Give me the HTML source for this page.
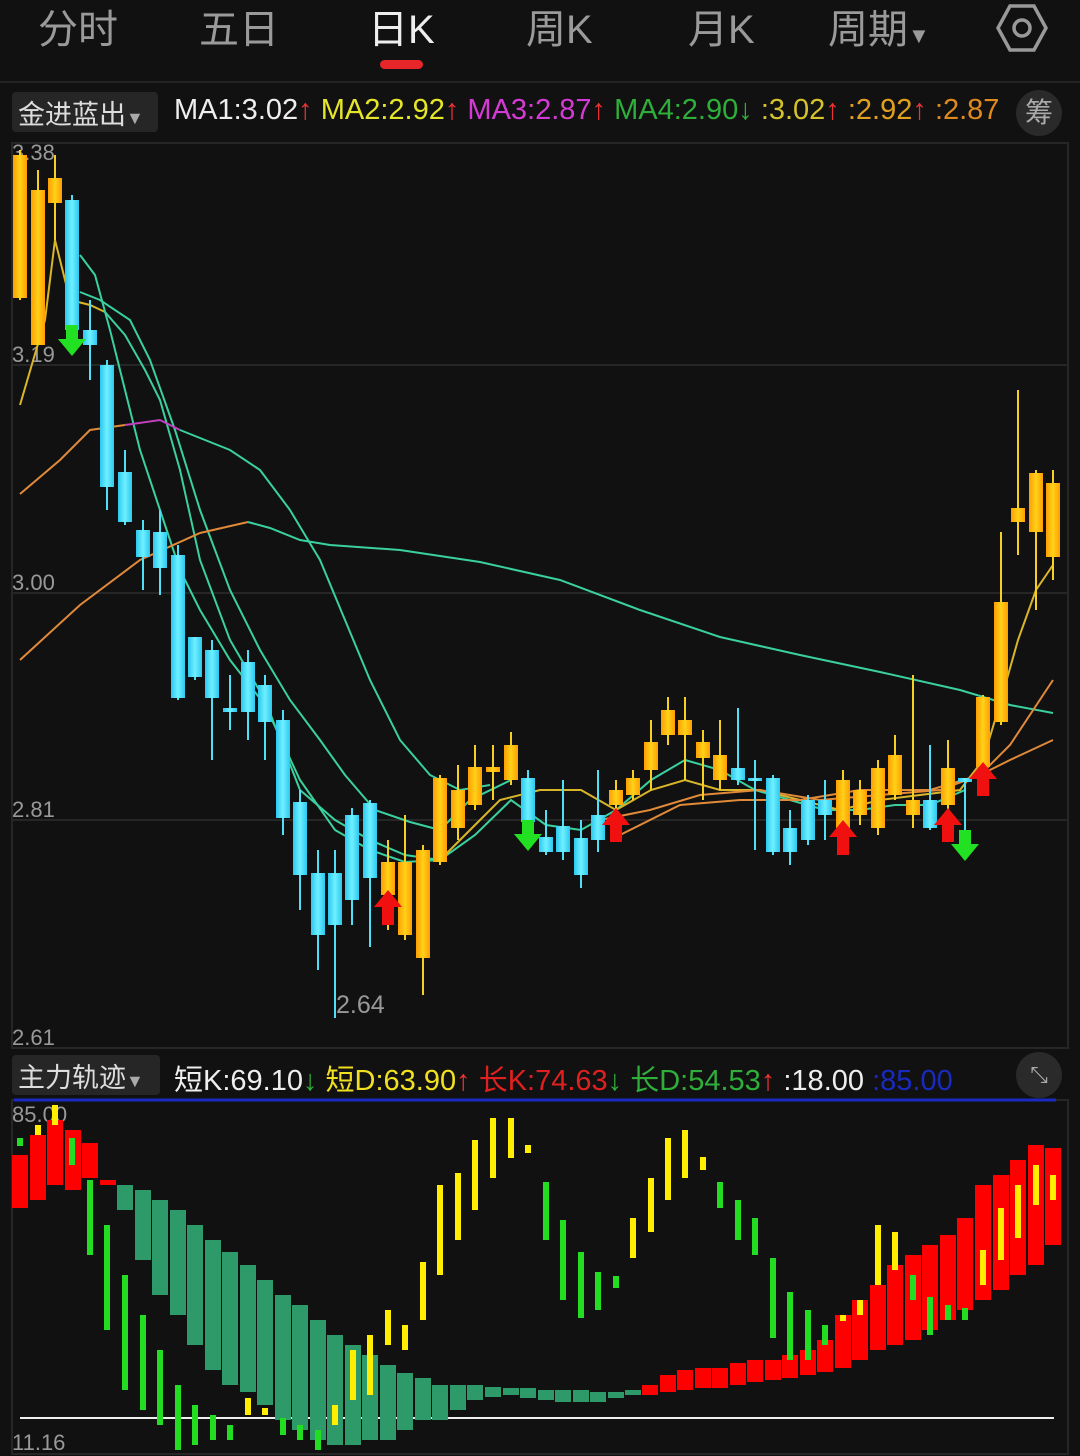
<!DOCTYPE html>
<html><head><meta charset="utf-8"><style>
body{margin:0;background:#111;width:1080px;height:1456px;overflow:hidden;font-family:"Liberation Sans","Noto Sans CJK SC",sans-serif}
.tab{position:absolute;top:-3px;font-size:40px;color:#9a9a9a}
.leg{position:absolute;font-size:29px;white-space:nowrap}
</style></head><body>
<div style="position:absolute;left:0;top:0;width:1080px;height:82px;background:#111"></div>
<div class="tab" style="left:38px">分时</div>
<div class="tab" style="left:199px">五日</div>
<div class="tab" style="left:368px;color:#eee">日K</div>
<div class="tab" style="left:526px">周K</div>
<div class="tab" style="left:688px">月K</div>
<div class="tab" style="left:828px">周期<span style="font-size:22px">▼</span></div>
<svg style="position:absolute;left:996px;top:2px" width="52" height="52" viewBox="0 0 52 52"><polygon points="14,4 38,4 50,26 38,48 14,48 2,26" fill="none" stroke="#999" stroke-width="3.5"/><circle cx="26" cy="26" r="8" fill="none" stroke="#999" stroke-width="3.5"/></svg>
<div style="position:absolute;left:380px;top:60px;width:43px;height:9px;border-radius:5px;background:#e8262a"></div>
<div style="position:absolute;left:0;top:81px;width:1080px;height:2px;background:#222"></div>
<div style="position:absolute;left:12px;top:92px;width:146px;height:40px;background:#262626;border-radius:4px"></div>
<div class="leg" style="left:18px;top:93px;color:#ddd;font-size:27px">金进蓝出<span style="font-size:18px;color:#aaa">▼</span></div>
<div class="leg" style="left:174px;top:94px"><span style="color:#eee">MA1:3.02</span><span style="color:#e33">↑</span> <span style="color:#e5e52a">MA2:2.92</span><span style="color:#e33">↑</span> <span style="color:#d63ad6">MA3:2.87</span><span style="color:#e33">↑</span> <span style="color:#2fae3a">MA4:2.90</span><span style="color:#2fae3a">↓</span> <span style="color:#d6c22a">:3.02</span><span style="color:#e33">↑</span> <span style="color:#e0a020">:2.92</span><span style="color:#e33">↑</span> <span style="color:#e0891e">:2.87</span></div>
<div style="position:absolute;left:1016px;top:90px;width:46px;height:46px;border-radius:23px;background:#2a2a2a;color:#aaa;font-size:28px;text-align:center;line-height:46px">筹</div>

<svg style="position:absolute;left:0;top:0" width="1080" height="1456">
<rect x="12" y="143" width="1056" height="905" fill="none" stroke="#262626" stroke-width="2"/>
<g stroke="#262626" stroke-width="2"><line x1="12" y1="365" x2="1068" y2="365"/><line x1="12" y1="593" x2="1068" y2="593"/><line x1="12" y1="820" x2="1068" y2="820"/></g>
<g fill="#999" font-size="22" font-family="Liberation Sans"><text x="12" y="160">3.38</text><text x="12" y="362">3.19</text><text x="12" y="590">3.00</text><text x="12" y="817">2.81</text><text x="12" y="1045">2.61</text><text x="336" y="1013" font-size="25">2.64</text></g>
<g fill="none" stroke-width="2">
<polyline stroke="#d9b52a" points="20,405 45,320 55,240 70,300 90,305 105,312"/>
<polyline stroke="#3ad0a0" points="105,312 125,335 145,370 160,400 180,470 200,560 230,640 265,700 300,790 335,820 370,840 405,855 440,860 475,835 511,800 546,825 581,830 616,810 651,780 685,760 720,770 755,790 790,800 825,810 860,810 895,805 930,805 965,790"/>
<polyline stroke="#3ad0a0" points="80,255 95,275 110,330 125,390 140,450 160,510 180,570 200,610 230,660 265,705 300,780 335,830 370,850 405,862 440,860"/>
<polyline stroke="#3ad0a0" points="80,292 100,300 130,320 150,360 175,430 200,510 230,590 260,650 290,700 320,740 345,775 375,810 410,822 440,830 470,800 511,780"/>
<polyline stroke="#e08a3a" points="20,494 60,460 90,430 125,425"/>
<polyline stroke="#c040c0" points="125,425 160,420 180,430"/>
<polyline stroke="#3ad0a0" points="180,430 230,450 260,470 290,510 320,560 345,620 370,680 400,740 430,775 460,790 490,785"/>
<polyline stroke="#e08a3a" points="20,660 80,605 140,560 200,533 248,522"/>
<polyline stroke="#3ad0a0" points="248,522 270,528 300,540 330,545 400,550 480,562 560,580 640,610 720,637 800,655 880,672 960,690 1010,705 1053,713"/>
<polyline stroke="#d9b52a" points="440,860 470,830 500,800 540,790 581,790 616,810 651,790 685,780 720,790 760,790 800,800 840,810 880,800 920,795 960,790 983,760 1001,700 1018,640 1036,590 1053,565"/>
<polyline stroke="#e08a3a" points="600,820 650,810 700,795 760,790 820,800 880,795 940,790 980,775 1010,745 1053,680"/>
<polyline stroke="#e08a3a" points="620,835 680,805 740,800 800,800 860,790 930,790 980,775 1010,760 1053,740"/>
</g>
<defs><linearGradient id="g" x1="0" x2="1"><stop offset="0" stop-color="#ff9d00"/><stop offset=".5" stop-color="#ffd21a"/><stop offset="1" stop-color="#ff9d00"/></linearGradient><linearGradient id="c" x1="0" x2="1"><stop offset="0" stop-color="#2cc8f0"/><stop offset=".5" stop-color="#6ff0ff"/><stop offset="1" stop-color="#2cc8f0"/></linearGradient></defs>
<g stroke-width="2">
<g stroke="#f5d020">
<line x1="20" y1="150" x2="20" y2="300"/><line x1="38" y1="170" x2="38" y2="345"/><line x1="55" y1="155" x2="55" y2="240"/>
<line x1="388" y1="840" x2="388" y2="930"/><line x1="405" y1="815" x2="405" y2="940"/><line x1="423" y1="845" x2="423" y2="995"/><line x1="440" y1="775" x2="440" y2="865"/><line x1="458" y1="765" x2="458" y2="840"/><line x1="475" y1="745" x2="475" y2="810"/><line x1="493" y1="745" x2="493" y2="800"/><line x1="511" y1="732" x2="511" y2="785"/>
<line x1="616" y1="780" x2="616" y2="815"/><line x1="633" y1="770" x2="633" y2="800"/><line x1="651" y1="720" x2="651" y2="790"/><line x1="668" y1="697" x2="668" y2="745"/><line x1="685" y1="697" x2="685" y2="780"/><line x1="703" y1="730" x2="703" y2="800"/><line x1="720" y1="720" x2="720" y2="790"/>
<line x1="843" y1="770" x2="843" y2="835"/><line x1="860" y1="780" x2="860" y2="825"/><line x1="878" y1="760" x2="878" y2="835"/><line x1="895" y1="735" x2="895" y2="800"/><line x1="913" y1="675" x2="913" y2="828"/><line x1="948" y1="740" x2="948" y2="810"/><line x1="983" y1="695" x2="983" y2="790"/><line x1="1001" y1="532" x2="1001" y2="725"/><line x1="1018" y1="390" x2="1018" y2="555"/><line x1="1036" y1="470" x2="1036" y2="610"/><line x1="1053" y1="470" x2="1053" y2="580"/>
</g>
<g stroke="#4fe0f5">
<line x1="72" y1="195" x2="72" y2="340"/><line x1="90" y1="300" x2="90" y2="380"/><line x1="107" y1="360" x2="107" y2="510"/><line x1="125" y1="450" x2="125" y2="525"/><line x1="143" y1="520" x2="143" y2="590"/><line x1="160" y1="510" x2="160" y2="595"/><line x1="178" y1="545" x2="178" y2="700"/><line x1="195" y1="637" x2="195" y2="680"/><line x1="212" y1="640" x2="212" y2="760"/><line x1="230" y1="675" x2="230" y2="730"/><line x1="248" y1="650" x2="248" y2="740"/><line x1="265" y1="675" x2="265" y2="760"/><line x1="283" y1="710" x2="283" y2="835"/><line x1="300" y1="790" x2="300" y2="910"/><line x1="318" y1="850" x2="318" y2="970"/><line x1="335" y1="850" x2="335" y2="1018"/><line x1="352" y1="808" x2="352" y2="925"/><line x1="370" y1="800" x2="370" y2="947"/>
<line x1="528" y1="770" x2="528" y2="840"/><line x1="546" y1="810" x2="546" y2="855"/><line x1="563" y1="780" x2="563" y2="860"/><line x1="581" y1="820" x2="581" y2="888"/><line x1="598" y1="770" x2="598" y2="852"/>
<line x1="738" y1="708" x2="738" y2="785"/><line x1="755" y1="760" x2="755" y2="850"/><line x1="773" y1="775" x2="773" y2="855"/><line x1="790" y1="810" x2="790" y2="865"/><line x1="808" y1="795" x2="808" y2="845"/><line x1="825" y1="780" x2="825" y2="840"/><line x1="930" y1="745" x2="930" y2="830"/><line x1="965" y1="778" x2="965" y2="830"/>
</g></g>
<g fill="url(#g)">
<rect x="13" y="155" width="14" height="143"/><rect x="31" y="190" width="14" height="155"/><rect x="48" y="178" width="14" height="25"/>
<rect x="381" y="862" width="14" height="33"/><rect x="398" y="862" width="14" height="73"/><rect x="416" y="850" width="14" height="108"/><rect x="433" y="778" width="14" height="84"/><rect x="451" y="790" width="14" height="38"/><rect x="468" y="767" width="14" height="38"/><rect x="486" y="767" width="14" height="5"/><rect x="504" y="745" width="14" height="35"/>
<rect x="609" y="790" width="14" height="15"/><rect x="626" y="778" width="14" height="17"/><rect x="644" y="742" width="14" height="28"/><rect x="661" y="710" width="14" height="25"/><rect x="678" y="720" width="14" height="15"/><rect x="696" y="742" width="14" height="16"/><rect x="713" y="755" width="14" height="25"/>
<rect x="836" y="780" width="14" height="48"/><rect x="853" y="790" width="14" height="25"/><rect x="871" y="768" width="14" height="60"/><rect x="888" y="755" width="14" height="40"/><rect x="906" y="800" width="14" height="15"/><rect x="941" y="768" width="14" height="37"/><rect x="976" y="697" width="14" height="70"/><rect x="994" y="602" width="14" height="120"/><rect x="1011" y="508" width="14" height="14"/><rect x="1029" y="473" width="14" height="59"/><rect x="1046" y="483" width="14" height="74"/>
</g>
<g fill="url(#c)">
<rect x="65" y="200" width="14" height="130"/><rect x="83" y="330" width="14" height="15"/><rect x="100" y="365" width="14" height="122"/><rect x="118" y="472" width="14" height="50"/><rect x="136" y="530" width="14" height="27"/><rect x="153" y="532" width="14" height="36"/><rect x="171" y="555" width="14" height="143"/><rect x="188" y="637" width="14" height="40"/><rect x="205" y="650" width="14" height="48"/><rect x="223" y="708" width="14" height="4"/><rect x="241" y="662" width="14" height="50"/><rect x="258" y="685" width="14" height="37"/><rect x="276" y="720" width="14" height="98"/><rect x="293" y="802" width="14" height="73"/><rect x="311" y="873" width="14" height="62"/><rect x="328" y="873" width="14" height="52"/><rect x="345" y="815" width="14" height="85"/><rect x="363" y="803" width="14" height="75"/>
<rect x="521" y="778" width="14" height="44"/><rect x="539" y="837" width="14" height="15"/><rect x="556" y="826" width="14" height="26"/><rect x="574" y="838" width="14" height="37"/><rect x="591" y="815" width="14" height="25"/>
<rect x="731" y="768" width="14" height="12"/><rect x="748" y="778" width="14" height="3"/><rect x="766" y="778" width="14" height="74"/><rect x="783" y="828" width="14" height="24"/><rect x="801" y="800" width="14" height="40"/><rect x="818" y="800" width="14" height="15"/><rect x="923" y="800" width="14" height="28"/><rect x="958" y="778" width="14" height="4"/>
</g>
<g fill="#22e022"><path d="M66,325h12v14h8l-14,17l-14,-17h8z"/><path d="M522,820h12v14h8l-14,17l-14,-17h8z"/><path d="M959,830h12v14h8l-14,17l-14,-17h8z"/></g>
<g fill="#f01010"><path d="M388,890l14,17h-8v18h-12v-18h-8z"/><path d="M616,808l14,17h-8v17h-12v-17h-8z"/><path d="M843,820l14,17h-8v18h-12v-18h-8z"/><path d="M948,808l14,17h-8v17h-12v-17h-8z"/><path d="M983,762l14,17h-8v17h-12v-17h-8z"/></g>

<rect x="12" y="1100" width="1056" height="354" fill="none" stroke="#262626" stroke-width="2"/>
<line x1="14" y1="1100" x2="1056" y2="1100" stroke="#1a2ac0" stroke-width="3"/>
<line x1="20" y1="1418" x2="1054" y2="1418" stroke="#eee" stroke-width="2"/>
<g fill="#999" font-size="22"><text x="12" y="1122">85.00</text><text x="12" y="1450">11.16</text></g>
<g fill="#ff0000">
<rect x="12" y="1155" width="16" height="53"/><rect x="30" y="1135" width="16" height="65"/><rect x="47" y="1120" width="16" height="65"/><rect x="65" y="1130" width="16" height="60"/><rect x="82" y="1143" width="16" height="35"/><rect x="100" y="1180" width="16" height="5"/>
<rect x="642" y="1385" width="16" height="10"/><rect x="660" y="1375" width="16" height="17"/><rect x="677" y="1370" width="16" height="20"/><rect x="695" y="1368" width="16" height="20"/><rect x="712" y="1368" width="16" height="20"/><rect x="730" y="1363" width="16" height="22"/><rect x="747" y="1360" width="16" height="22"/><rect x="765" y="1360" width="16" height="20"/><rect x="782" y="1355" width="16" height="23"/><rect x="800" y="1350" width="16" height="25"/><rect x="817" y="1340" width="16" height="32"/><rect x="835" y="1315" width="16" height="53"/><rect x="852" y="1300" width="16" height="60"/><rect x="870" y="1285" width="16" height="65"/><rect x="887" y="1265" width="16" height="80"/><rect x="905" y="1255" width="16" height="85"/><rect x="922" y="1245" width="16" height="85"/><rect x="940" y="1235" width="16" height="85"/><rect x="957" y="1218" width="16" height="92"/><rect x="975" y="1185" width="16" height="115"/><rect x="993" y="1175" width="16" height="115"/><rect x="1010" y="1160" width="16" height="115"/><rect x="1028" y="1145" width="16" height="120"/><rect x="1045" y="1148" width="16" height="97"/>
</g>
<g fill="#2e9a6a">
<rect x="117" y="1185" width="16" height="25"/><rect x="135" y="1190" width="16" height="70"/><rect x="152" y="1200" width="16" height="95"/><rect x="170" y="1210" width="16" height="105"/><rect x="187" y="1225" width="16" height="120"/><rect x="205" y="1240" width="16" height="130"/><rect x="222" y="1252" width="16" height="133"/><rect x="240" y="1265" width="16" height="127"/><rect x="257" y="1280" width="16" height="125"/><rect x="275" y="1295" width="16" height="125"/><rect x="292" y="1305" width="16" height="125"/><rect x="310" y="1320" width="16" height="120"/><rect x="327" y="1335" width="16" height="110"/><rect x="345" y="1345" width="16" height="100"/><rect x="362" y="1355" width="16" height="85"/><rect x="380" y="1365" width="16" height="75"/><rect x="397" y="1373" width="16" height="57"/><rect x="415" y="1378" width="16" height="42"/><rect x="432" y="1385" width="16" height="35"/><rect x="450" y="1385" width="16" height="25"/><rect x="467" y="1385" width="16" height="15"/><rect x="485" y="1387" width="16" height="10"/><rect x="503" y="1388" width="16" height="7"/><rect x="520" y="1388" width="16" height="10"/><rect x="538" y="1390" width="16" height="10"/><rect x="555" y="1390" width="16" height="12"/><rect x="573" y="1390" width="16" height="12"/><rect x="590" y="1392" width="16" height="10"/><rect x="608" y="1392" width="16" height="6"/><rect x="625" y="1390" width="16" height="5"/>
</g>
<g fill="#22dd22">
<rect x="17" y="1138" width="6" height="8"/><rect x="69" y="1138" width="6" height="27"/><rect x="87" y="1180" width="6" height="75"/><rect x="104" y="1225" width="6" height="105"/><rect x="122" y="1275" width="6" height="115"/><rect x="140" y="1315" width="6" height="95"/><rect x="157" y="1350" width="6" height="75"/><rect x="175" y="1385" width="6" height="65"/><rect x="192" y="1405" width="6" height="40"/><rect x="210" y="1415" width="6" height="25"/><rect x="227" y="1425" width="6" height="15"/><rect x="280" y="1418" width="6" height="17"/><rect x="297" y="1425" width="6" height="15"/><rect x="315" y="1430" width="6" height="20"/>
<rect x="543" y="1182" width="6" height="58"/><rect x="560" y="1220" width="6" height="80"/><rect x="578" y="1252" width="6" height="66"/><rect x="595" y="1272" width="6" height="38"/><rect x="613" y="1276" width="6" height="12"/><rect x="717" y="1182" width="6" height="26"/><rect x="735" y="1200" width="6" height="40"/><rect x="752" y="1218" width="6" height="37"/><rect x="770" y="1258" width="6" height="80"/><rect x="787" y="1292" width="6" height="68"/><rect x="805" y="1310" width="6" height="50"/><rect x="822" y="1325" width="6" height="20"/><rect x="910" y="1275" width="6" height="25"/><rect x="927" y="1297" width="6" height="38"/><rect x="945" y="1305" width="6" height="15"/><rect x="962" y="1308" width="6" height="12"/>
</g>
<g fill="#ffee00">
<rect x="35" y="1125" width="6" height="10"/><rect x="52" y="1105" width="6" height="20"/><rect x="245" y="1398" width="6" height="17"/><rect x="262" y="1408" width="6" height="7"/><rect x="332" y="1405" width="6" height="20"/><rect x="350" y="1350" width="6" height="50"/><rect x="367" y="1335" width="6" height="60"/><rect x="385" y="1310" width="6" height="35"/><rect x="402" y="1325" width="6" height="25"/><rect x="420" y="1262" width="6" height="58"/><rect x="437" y="1185" width="6" height="90"/><rect x="455" y="1173" width="6" height="67"/><rect x="472" y="1140" width="6" height="70"/><rect x="490" y="1118" width="6" height="60"/><rect x="508" y="1118" width="6" height="40"/><rect x="525" y="1145" width="6" height="8"/><rect x="630" y="1218" width="6" height="40"/><rect x="648" y="1178" width="6" height="54"/><rect x="665" y="1138" width="6" height="62"/><rect x="682" y="1130" width="6" height="48"/><rect x="700" y="1157" width="6" height="13"/><rect x="840" y="1315" width="6" height="6"/><rect x="857" y="1300" width="6" height="15"/><rect x="875" y="1225" width="6" height="60"/><rect x="892" y="1232" width="6" height="38"/><rect x="980" y="1250" width="6" height="35"/><rect x="998" y="1208" width="6" height="52"/><rect x="1015" y="1185" width="6" height="53"/><rect x="1033" y="1165" width="6" height="40"/><rect x="1050" y="1175" width="6" height="25"/>
</g>
</svg>
<div style="position:absolute;left:12px;top:1055px;width:148px;height:40px;background:#262626;border-radius:4px"></div>
<div class="leg" style="left:18px;top:1056px;color:#ddd;font-size:27px">主力轨迹<span style="font-size:18px;color:#aaa">▼</span></div>
<div class="leg" style="left:174px;top:1057px"><span style="color:#eee">短K:69.10</span><span style="color:#2fae3a">↓</span> <span style="color:#f0e020">短D:63.90</span><span style="color:#e33">↑</span> <span style="color:#e02020">长K:74.63</span><span style="color:#2fae3a">↓</span> <span style="color:#2fae3a">长D:54.53</span><span style="color:#e33">↑</span> <span style="color:#eee">:18.00</span> <span style="color:#1a2ac0">:85.00</span></div>
<div style="position:absolute;left:1016px;top:1052px;width:46px;height:46px;border-radius:23px;background:#2a2a2a;color:#aaa;font-size:22px;text-align:center;line-height:46px">⤡</div>
</body></html>
